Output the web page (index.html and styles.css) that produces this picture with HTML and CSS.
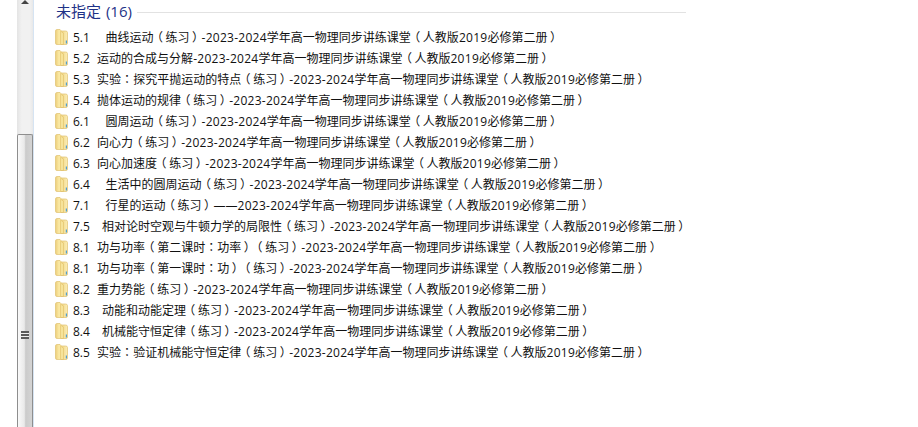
FILE: index.html
```html
<!DOCTYPE html>
<html lang="zh-CN">
<head>
<meta charset="utf-8">
<title>未指定</title>
<link rel="stylesheet" href="styles.css">
</head>
<body>
<svg width="0" height="0" class="defs"><defs>
<linearGradient id="fb" x1="0" x2="1" y1="0" y2="0"><stop offset="0" stop-color="#ecce7a"/><stop offset=".3" stop-color="#fbeaa6"/><stop offset=".55" stop-color="#f3d98c"/><stop offset="1" stop-color="#fbedb4"/></linearGradient>
<symbol id="folder" viewBox="0 0 13 16">
<path d="M.5 2Q.5 .5 2 .5h3l1.500 1.500h4Q12.500 2 12.500 3.500v10.500q0 1.500-1.500 1.500H2Q.5 15.500 .5 14z" fill="url(#fb)" stroke="#e0c270" stroke-width=".7"/>
<path d="M5.500 2 8.800 4V15.500H5.500z" fill="#dfbb60"/>
<path d="M6 2.800 8.300 4.300V15H6z" fill="#f6e39a"/>
<path d="M10.800 11.500h1.200v3h-1.200z" fill="#4f9fd6"/>
</symbol>
</defs></svg>
<div class="window">
<div class="rail">
<div class="track">
<div class="arrow"></div>
<div class="thumb"><div class="grip"></div></div>
</div>
</div>
<main class="content">
<header class="group-head"><h2 class="group-title">未指定 (16)</h2><div class="group-line"></div></header>
<ul class="list">
<li class="row"><svg class="ic"><use href="#folder"/></svg><span class="name">5.1　&nbsp;曲线运动<i class="p">（</i>练习<i class="p">）</i><span class="n">-2023-2024</span>学年高一物理同步讲练课堂<i class="p">（</i>人教版<span class="n">2019</span>必修第二册<i class="p">）</i></span></li>
<li class="row"><svg class="ic"><use href="#folder"/></svg><span class="name">5.2&nbsp; 运动的合成与分解<span class="n">-2023-2024</span>学年高一物理同步讲练课堂<i class="p">（</i>人教版<span class="n">2019</span>必修第二册<i class="p">）</i></span></li>
<li class="row"><svg class="ic"><use href="#folder"/></svg><span class="name">5.3&nbsp; 实验<i class="p">：</i>探究平抛运动的特点<i class="p">（</i>练习<i class="p">）</i><span class="n">-2023-2024</span>学年高一物理同步讲练课堂<i class="p">（</i>人教版<span class="n">2019</span>必修第二册<i class="p">）</i></span></li>
<li class="row"><svg class="ic"><use href="#folder"/></svg><span class="name">5.4&nbsp; 抛体运动的规律<i class="p">（</i>练习<i class="p">）</i><span class="n">-2023-2024</span>学年高一物理同步讲练课堂<i class="p">（</i>人教版<span class="n">2019</span>必修第二册<i class="p">）</i></span></li>
<li class="row"><svg class="ic"><use href="#folder"/></svg><span class="name">6.1　&nbsp;圆周运动<i class="p">（</i>练习<i class="p">）</i><span class="n">-2023-2024</span>学年高一物理同步讲练课堂<i class="p">（</i>人教版<span class="n">2019</span>必修第二册<i class="p">）</i></span></li>
<li class="row"><svg class="ic"><use href="#folder"/></svg><span class="name">6.2&nbsp; 向心力<i class="p">（</i>练习<i class="p">）</i><span class="n">-2023-2024</span>学年高一物理同步讲练课堂<i class="p">（</i>人教版<span class="n">2019</span>必修第二册<i class="p">）</i></span></li>
<li class="row"><svg class="ic"><use href="#folder"/></svg><span class="name">6.3&nbsp; 向心加速度<i class="p">（</i>练习<i class="p">）</i><span class="n">-2023-2024</span>学年高一物理同步讲练课堂<i class="p">（</i>人教版<span class="n">2019</span>必修第二册<i class="p">）</i></span></li>
<li class="row"><svg class="ic"><use href="#folder"/></svg><span class="name">6.4　&nbsp;生活中的圆周运动<i class="p">（</i>练习<i class="p">）</i><span class="n">-2023-2024</span>学年高一物理同步讲练课堂<i class="p">（</i>人教版<span class="n">2019</span>必修第二册<i class="p">）</i></span></li>
<li class="row"><svg class="ic"><use href="#folder"/></svg><span class="name">7.1　&nbsp;行星的运动<i class="p">（</i>练习<i class="p">）</i>——<span class="n">2023-2024</span>学年高一物理同步讲练课堂<i class="p">（</i>人教版<span class="n">2019</span>必修第二册<i class="p">）</i></span></li>
<li class="row"><svg class="ic"><use href="#folder"/></svg><span class="name">7.5　相对论时空观与牛顿力学的局限性<i class="p">（</i>练习<i class="p">）</i><span class="n">-2023-2024</span>学年高一物理同步讲练课堂<i class="p">（</i>人教版<span class="n">2019</span>必修第二册<i class="p">）</i></span></li>
<li class="row"><svg class="ic"><use href="#folder"/></svg><span class="name">8.1&nbsp; 功与功率<i class="p">（</i>第二课时<i class="p">：</i>功率<i class="p">）</i><i class="p">（</i>练习<i class="p">）</i><span class="n">-2023-2024</span>学年高一物理同步讲练课堂<i class="p">（</i>人教版<span class="n">2019</span>必修第二册<i class="p">）</i></span></li>
<li class="row"><svg class="ic"><use href="#folder"/></svg><span class="name">8.1&nbsp; 功与功率<i class="p">（</i>第一课时<i class="p">：</i>功<i class="p">）</i><i class="p">（</i>练习<i class="p">）</i><span class="n">-2023-2024</span>学年高一物理同步讲练课堂<i class="p">（</i>人教版<span class="n">2019</span>必修第二册<i class="p">）</i></span></li>
<li class="row"><svg class="ic"><use href="#folder"/></svg><span class="name">8.2&nbsp; 重力势能<i class="p">（</i>练习<i class="p">）</i><span class="n">-2023-2024</span>学年高一物理同步讲练课堂<i class="p">（</i>人教版<span class="n">2019</span>必修第二册<i class="p">）</i></span></li>
<li class="row"><svg class="ic"><use href="#folder"/></svg><span class="name">8.3　动能和动能定理<i class="p">（</i>练习<i class="p">）</i><span class="n">-2023-2024</span>学年高一物理同步讲练课堂<i class="p">（</i>人教版<span class="n">2019</span>必修第二册<i class="p">）</i></span></li>
<li class="row"><svg class="ic"><use href="#folder"/></svg><span class="name">8.4　机械能守恒定律<i class="p">（</i>练习<i class="p">）</i><span class="n">-2023-2024</span>学年高一物理同步讲练课堂<i class="p">（</i>人教版<span class="n">2019</span>必修第二册<i class="p">）</i></span></li>
<li class="row"><svg class="ic"><use href="#folder"/></svg><span class="name">8.5&nbsp; 实验<i class="p">：</i>验证机械能守恒定律<i class="p">（</i>练习<i class="p">）</i><span class="n">-2023-2024</span>学年高一物理同步讲练课堂<i class="p">（</i>人教版<span class="n">2019</span>必修第二册<i class="p">）</i></span></li>
</ul>
</main>
</div>
</body>
</html>
```
FILE: styles.css
```css
html, body { margin: 0; height: 100%; background: #fff; overflow: hidden; }
.defs { position: absolute; }
.window { display: flex; height: 427px; width: 918px; font-family: "Open Sans", "Noto Sans CJK SC", sans-serif; color: #111; }
.rail { width: 17px; padding-left: 17px; flex: none; }
.track { width: 17px; height: 427px; background: linear-gradient(90deg, #e4e4e4, #f1f1f1 30%, #f1f1f1 80%, #e8e8e8); border-right: 1px solid #d6e4f3; box-sizing: border-box; display: flex; flex-direction: column; align-items: center; }
.arrow { width: 0; height: 0; border-left: 4px solid transparent; border-right: 4px solid transparent; border-bottom: 4px solid #444; flex: none; }
.thumb { margin-top: 130px; flex: 1; width: 100%; box-sizing: border-box; background: linear-gradient(90deg, #fafafa, #e9e9e9 45%, #cbcbcb 55%, #d4d4d4); border: 1px solid #8e8e8e; border-bottom: 0; border-radius: 2px 2px 0 0; display: flex; justify-content: center; padding-top: 196px; }
.grip { width: 8px; height: 8px; background: repeating-linear-gradient(180deg, #5a5a5a 0, #5a5a5a 2px, #eee 2px, #eee 3px); }
.content { flex: none; width: 630px; padding-left: 21px; }
.group-head { display: flex; align-items: center; gap: 5px; height: 25px; width: 631px; }
.group-title { margin: 0 0 3px 1px; font-size: 15px; font-weight: 400; color: #1e3287; line-height: 22px; white-space: nowrap; word-spacing: 1px; }
.group-line { flex: 1; height: 1px; background: #e2e2e2; }
.list { list-style: none; margin: 1px 0 0; padding: 0; width: 800px; }
.row { display: flex; align-items: center; height: 21px; white-space: nowrap; }
.ic { width: 13px; height: 16px; flex: none; margin-right: 5px; }
.name { font-size: 12px; line-height: 21px; word-spacing: .5px; }
.n { letter-spacing: .27px; }
.p { display: inline-block; width: 12px; text-align: center; font-style: normal; font-family: "Noto Sans CJK TC", sans-serif; font-feature-settings: "palt"; }
```
